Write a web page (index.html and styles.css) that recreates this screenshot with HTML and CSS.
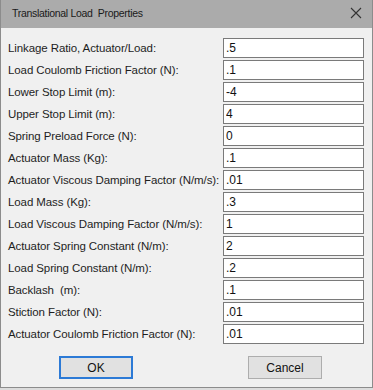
FILE: index.html
```html
<!DOCTYPE html>
<html lang="en">
<head>
  <meta charset="UTF-8">
  <title>Translational Load Properties</title>
  <link rel="stylesheet" href="styles.css">
</head>
<body>
  <div class="dialog">
    <div class="titlebar">
      <span class="title">Translational Load&nbsp; Properties</span>
      <svg class="close" width="12" height="12" viewBox="0 0 12 12">
        <path d="M1 1 L11 11 M11 1 L1 11" stroke="#333" stroke-width="1.1" fill="none"/>
      </svg>
    </div>
    <div class="panel">
      <div class="fields">
        <label>Linkage Ratio, Actuator/Load:</label><input type="text" value=".5">
        <label>Load Coulomb Friction Factor (N):</label><input type="text" value=".1">
        <label>Lower Stop Limit (m):</label><input type="text" value="-4">
        <label>Upper Stop Limit (m):</label><input type="text" value="4">
        <label>Spring Preload Force (N):</label><input type="text" value="0">
        <label>Actuator Mass (Kg):</label><input type="text" value=".1">
        <label>Actuator Viscous Damping Factor (N/m/s):</label><input type="text" value=".01">
        <label>Load Mass (Kg):</label><input type="text" value=".3">
        <label>Load Viscous Damping Factor (N/m/s):</label><input type="text" value="1">
        <label>Actuator Spring Constant (N/m):</label><input type="text" value="2">
        <label>Load Spring Constant (N/m):</label><input type="text" value=".2">
        <label>Backlash&nbsp; (m):</label><input type="text" value=".1">
        <label>Stiction Factor (N):</label><input type="text" value=".01">
        <label>Actuator Coulomb Friction Factor (N):</label><input type="text" value=".01">
      </div>
      <div class="buttons">
        <button class="btn default">OK</button>
        <button class="btn">Cancel</button>
      </div>
    </div>
  </div>
</body>
</html>
```

FILE: styles.css
```css
body {
  margin: 0;
  font-family: "Liberation Sans", Arial, sans-serif;
  background: #dcdcdc;
}
.dialog {
  width: 371px;
  height: 387px;
  border: 1px solid #8c8c8c;
  border-top: none;
  background: #f0f0f0;
  overflow: hidden;
}
.titlebar {
  height: 28px;
  background: #ababab;
  display: flex;
  align-items: center;
  justify-content: space-between;
  padding: 0 10px 0 11px;
}
.title {
  font-size: 10.5px;
  letter-spacing: -0.3px;
  color: #1a1a1a;
  margin-top: -2px;
}
.close {
  margin-top: -2px;
}
.panel {
  padding: 10px 7px 0 7px;
}
.fields {
  display: grid;
  grid-template-columns: 215px 141px;
  row-gap: 2px;
  align-items: center;
}
.fields label {
  font-size: 11.5px;
  letter-spacing: -0.1px;
  white-space: nowrap;
  color: #1e1e1e;
}
.fields input {
  width: 141px;
  height: 20px;
  box-sizing: border-box;
  border: 1px solid #7a7a7a;
  background: #fff;
  font-family: "Liberation Sans", Arial, sans-serif;
  font-size: 12px;
  color: #111;
  padding: 0 2px;
  margin: 0;
  outline: none;
}
.buttons {
  display: flex;
  padding: 12px 0 0 51px;
  gap: 115px;
}
.btn {
  width: 74px;
  height: 23px;
  font-family: "Liberation Sans", Arial, sans-serif;
  font-size: 12px;
  color: #111;
  background: #e1e1e1;
  border: 1px solid #adadad;
  padding: 0;
}
.btn.default {
  border: 2px solid #2c7ad6;
}
```
